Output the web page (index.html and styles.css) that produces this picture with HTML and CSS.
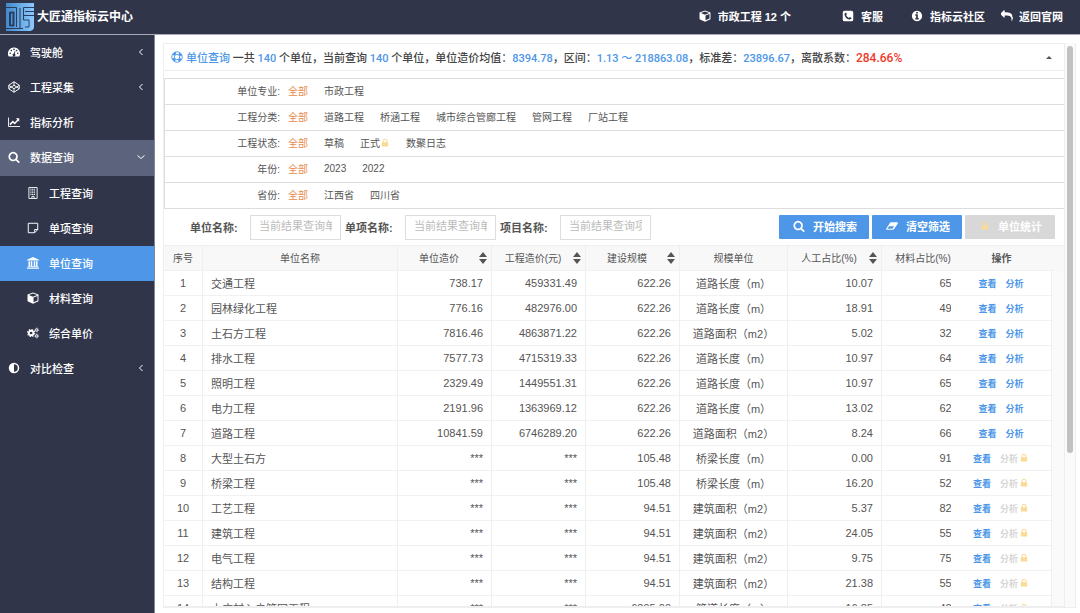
FILE: index.html
```html
<!DOCTYPE html>
<html lang="zh-CN">
<head>
    <meta charset="UTF-8">
    <meta name="viewport" content="width=device-width, initial-scale=1.0">
    <title>大匠通指标云中心</title>
    <link rel="stylesheet" href="styles.css">
</head>
<body>
    <!-- Icon set -->
    <svg class="sprite" aria-hidden="true">
        <symbol id="i-dashboard" viewBox="0 0 16 16"><path fill="currentColor" fill-rule="evenodd" d="M8 2a8 8 0 0 0-7 12h14A8 8 0 0 0 8 2zM3 8.700a1.100 1.100 0 1 1 0 2.200 1.100 1.100 0 0 1 0-2.200zM4.500 5a1.100 1.100 0 1 1 0 2.200 1.100 1.100 0 0 1 0-2.200zM8 3.400a1.100 1.100 0 1 1 0 2.200 1.100 1.100 0 0 1 0-2.200zM11.500 5a1.100 1.100 0 1 1 0 2.200 1.100 1.100 0 0 1 0-2.200zM13 8.700a1.100 1.100 0 1 1 0 2.200 1.100 1.100 0 0 1 0-2.200zM9 6.600l1 .3-1 3.500a1.800 1.800 0 1 1-1.100-.3z"/></symbol>
        <symbol id="i-codepen" viewBox="0 0 16 16"><path fill="none" stroke="currentColor" stroke-width="1.300" stroke-linejoin="round" d="M8 1l7 4.700v4.600L8 15l-7-4.700V5.700zM8 1v4.700M8 10.300V15M1 5.700l7 4.600 7-4.600M1 10.300l7-4.600 7 4.600"/></symbol>
        <symbol id="i-chart" viewBox="0 0 16 16"><path fill="none" stroke="currentColor" stroke-width="1.200" d="M.7 2v12H16"/><path fill="none" stroke="currentColor" stroke-width="2" d="M2.500 11.500l4-4 2.500 2.500L13.500 5"/><path fill="currentColor" d="M10.500 3H15v4.500z"/></symbol>
        <symbol id="i-search" viewBox="0 0 1792 1792"><path fill="currentColor" d="M1216 832q0-185-131.500-316.500t-316.500-131.500-316.500 131.500-131.500 316.500 131.500 316.500 316.500 131.500 316.500-131.500 131.500-316.500zm512 832q0 52-38 90t-90 38q-54 0-90-38l-343-342q-179 124-399 124-143 0-273.500-55.500t-225-150-150-225-55.500-273.500 55.500-273.500 150-225 225-150 273.500-55.500 273.500 55.500 225 150 150 225 55.500 273.500q0 220-124 399l343 343q37 37 37 90z"/></symbol>
        <symbol id="i-building" viewBox="0 0 16 16"><path fill="none" stroke="currentColor" stroke-width="1.200" d="M2.500.700h11v14.600h-11zM6.500 15v-2.500h3V15"/><path stroke="currentColor" stroke-width="1.400" stroke-dasharray="1.500 .8" d="M4.500 3h7M4.500 5.300h7M4.500 7.600h7M4.500 9.900h7"/></symbol>
        <symbol id="i-note" viewBox="0 0 16 16"><path fill="none" stroke="currentColor" stroke-width="1.300" stroke-linejoin="round" d="M1.700 1.700h12.600v8.500l-4.100 4.100H1.700zM14.300 10h-4.100v4.300"/></symbol>
        <symbol id="i-bank" viewBox="0 0 16 16"><path fill="currentColor" d="M8 0l8 3.500v1H0v-1zM2 5.500h2V12h1V5.500h2V12h2V5.500h2V12h1V5.500h2V12h1v1H1v-1h1zM0 14h16v1.500H0z"/></symbol>
        <symbol id="i-cube" viewBox="0 0 16 16"><path fill="currentColor" fill-rule="evenodd" d="M8 .5l7.300 2.900v8.800L8 15.700.7 12.200V3.400zM8 1.900L2.500 4 8 6.200 13.500 4zM8.700 13.800l5.300-2.600V5.300L8.700 7.400z"/></symbol>
        <symbol id="i-cogs" viewBox="0 0 16 16"><g fill="none" stroke="currentColor"><circle cx="5.500" cy="8" r="3" stroke-width="2.400"/><circle cx="5.500" cy="8" r="4.800" stroke-width="1.400" stroke-dasharray="1.900 1.870"/><circle cx="13" cy="4" r="1.600" stroke-width="1.300"/><circle cx="13" cy="4" r="2.600" stroke-width=".8" stroke-dasharray="1.100 .94"/><circle cx="13" cy="12" r="1.600" stroke-width="1.300"/><circle cx="13" cy="12" r="2.600" stroke-width=".8" stroke-dasharray="1.100 .94"/></g></symbol>
        <symbol id="i-adjust" viewBox="0 0 16 16"><path fill="currentColor" fill-rule="evenodd" d="M8 1a7 7 0 1 1 0 14A7 7 0 0 1 8 1zm0 2v10A5 5 0 0 0 8 3z"/></symbol>
        <symbol id="i-phone" viewBox="0 0 16 16"><path fill="currentColor" fill-rule="evenodd" d="M3.500 1h9A2.500 2.500 0 0 1 15 3.500v9a2.500 2.500 0 0 1-2.500 2.500h-9A2.500 2.500 0 0 1 1 12.500v-9A2.500 2.500 0 0 1 3.500 1zm1.700 2.200C3.700 3.700 3 4.900 3.400 6.500c.8 3 3 5.200 6 6.100 1.600.4 2.900-.2 3.400-1.800l-2.300-1.400-1.300 1.200C7.500 9.800 6.200 8.500 5.400 6.800l1.200-1.300z"/></symbol>
        <symbol id="i-info" viewBox="0 0 1792 1792"><path fill="currentColor" d="M1152 1376v-160q0-14-9-23t-23-9h-96v-512q0-14-9-23t-23-9h-320q-14 0-23 9t-9 23v160q0 14 9 23t23 9h96v320h-96q-14 0-23 9t-9 23v160q0 14 9 23t23 9h448q14 0 23-9t9-23zm-128-896v-160q0-14-9-23t-23-9h-192q-14 0-23 9t-9 23v160q0 14 9 23t23 9h192q14 0 23-9t9-23zm640 416q0 209-103 385.500t-279.500 279.500-385.500 103-385.500-103-279.500-279.500-103-385.500 103-385.500 279.500-279.500 385.500-103 385.500 103 279.500 279.500 103 385.500z"/></symbol>
        <symbol id="i-reply" viewBox="0 0 1792 1792"><path fill="currentColor" d="M1792 1120q0 166-127 451-3 7-10.500 24t-13.500 30-13 22q-12 17-28 17-15 0-23.500-10t-8.500-25q0-9 2.500-26.500t2.500-23.500q5-68 5-123 0-112-19.500-200.500t-54-153.500-89-112-117.500-79-150.500-47-175-25-206-7h-224v256q0 26-19 45t-45 19-45-19l-512-512q-19-19-19-45t19-45l512-512q19-19 45-19t45 19 19 45v256h224q713 0 875 403 53 134 53 333z"/></symbol>
        <symbol id="i-lock" viewBox="0 0 1792 1792"><path fill="currentColor" d="M640 768h512v-192q0-106-75-181t-181-75-181 75-75 181v192zm832 96v576q0 40-28 68t-68 28h-960q-40 0-68-28t-28-68v-576q0-40 28-68t68-28h32v-192q0-184 132-316t316-132 316 132 132 316v192h32q40 0 68 28t28 68z"/></symbol>
        <symbol id="i-eraser" viewBox="0 0 16 16"><path fill="currentColor" fill-rule="evenodd" d="M6.500 3H15q1.300.2.800 1.500l-5 7.500q-.5 1-1.600 1H1Q-.300 12.700.200 11.500l5-7.500q.5-1 1.300-1zM1.800 11.700H8.500l2.300-3.400H4.100z"/></symbol>
        <symbol id="i-ring" viewBox="0 0 16 16"><g fill="none" stroke="currentColor"><circle cx="8" cy="8" r="7" stroke-width="1.200"/><circle cx="8" cy="8" r="3.600" stroke-width="1.200"/><circle cx="8" cy="8" r="5.300" stroke-width="3" stroke-dasharray="4.160 4.160" stroke-dashoffset="6.240"/></g></symbol>
        <symbol id="i-left" viewBox="0 0 16 16"><path fill="none" stroke="currentColor" stroke-width="2" d="M11 2L5 8l6 6"/></symbol>
        <symbol id="i-down" viewBox="0 0 16 16"><path fill="none" stroke="currentColor" stroke-width="2" d="M1 5l7 6 7-6"/></symbol>
        <symbol id="i-sort" viewBox="0 0 8 12"><path fill="currentColor" d="M4 0l4 5H0zM0 7h8l-4 5z"/></symbol>
        <symbol id="i-up" viewBox="0 0 6 3"><path fill="currentColor" d="M3 0l3 3H0z"/></symbol>
    </svg>

    <header class="topbar">
        <svg class="logo" viewBox="0 0 28 28" role="img" aria-label="logo">
            <defs><linearGradient id="logoFill"><stop offset="0" stop-color="#4089cb"/><stop offset="1" stop-color="#8dcaff"/></linearGradient></defs>
            <path fill="url(#logoFill)" d="M0 0h28v24q0 3-4 4H0z"/>
            <g fill="none" stroke="#2b3d5e">
                <path d="M0 4.500h10.500V24M28 4.500H17.500V14M28 8.500H19M28 12.500H17.500V17H23v7h-4M14 5v20M0 25.500h17"/>
                <path stroke-width="2" d="M4 9v14M4 9.500h3.500v13H4"/>
            </g>
        </svg>
        <h1 class="brand">大匠通指标云中心</h1>
        <nav class="top-links">
            <a href="#" class="link-project"><svg class="icon"><use href="#i-cube"/></svg>市政工程 12 个</a>
            <a href="#" class="link-service"><svg class="icon"><use href="#i-phone"/></svg>客服</a>
            <a href="#" class="link-community"><svg class="icon"><use href="#i-info"/></svg>指标云社区</a>
            <a href="#" class="link-home"><svg class="icon"><use href="#i-reply"/></svg>返回官网</a>
        </nav>
    </header>

    <div class="layout">
        <nav class="sidebar">
            <a href="#"><svg class="icon"><use href="#i-dashboard"/></svg>驾驶舱<svg class="arrow"><use href="#i-left"/></svg></a>
            <a href="#"><svg class="icon"><use href="#i-codepen"/></svg>工程采集<svg class="arrow"><use href="#i-left"/></svg></a>
            <a href="#"><svg class="icon"><use href="#i-chart"/></svg>指标分析</a>
            <a href="#" class="open"><svg class="icon"><use href="#i-search"/></svg>数据查询<svg class="arrow"><use href="#i-down"/></svg></a>
            <a href="#" class="sub"><svg class="icon"><use href="#i-building"/></svg>工程查询</a>
            <a href="#" class="sub"><svg class="icon"><use href="#i-note"/></svg>单项查询</a>
            <a href="#" class="sub active"><svg class="icon"><use href="#i-bank"/></svg>单位查询</a>
            <a href="#" class="sub"><svg class="icon"><use href="#i-cube"/></svg>材料查询</a>
            <a href="#" class="sub"><svg class="icon"><use href="#i-cogs"/></svg>综合单价</a>
            <a href="#"><svg class="icon"><use href="#i-adjust"/></svg>对比检查<svg class="arrow"><use href="#i-left"/></svg></a>
        </nav>

        <main class="content">
            <section class="panel">
                <div class="summary">
                    <svg class="icon"><use href="#i-ring"/></svg>
                    <p><b>单位查询</b> 一共 <b>140</b> 个单位，当前查询 <b>140</b> 个单位，单位造价均值：<b>8394.78</b>，区间：<b>1.13 ～ 218863.08</b>，标准差：<b>23896.67</b>，离散系数：<strong>284.66%</strong></p>
                    <button type="button" class="collapse" aria-label="收起"><svg><use href="#i-up"/></svg></button>
                </div>

                <div class="filters">
                    <div class="filter"><span class="name">单位专业:</span><a href="#" class="on">全部</a><a href="#">市政工程</a></div>
                    <div class="filter"><span class="name">工程分类:</span><a href="#" class="on">全部</a><a href="#">道路工程</a><a href="#">桥涵工程</a><a href="#">城市综合管廊工程</a><a href="#">管网工程</a><a href="#">厂站工程</a></div>
                    <div class="filter"><span class="name">工程状态:</span><a href="#" class="on">全部</a><a href="#">草稿</a><a href="#">正式<svg class="lock"><use href="#i-lock"/></svg></a><a href="#">数聚日志</a></div>
                    <div class="filter"><span class="name">年份:</span><a href="#" class="on">全部</a><a href="#">2023</a><a href="#">2022</a></div>
                    <div class="filter"><span class="name">省份:</span><a href="#" class="on">全部</a><a href="#">江西省</a><a href="#">四川省</a></div>
                </div>

                <form class="search">
                    <label for="unitName">单位名称:</label>
                    <input type="text" id="unitName" placeholder="当前结果查询单位">
                    <label for="itemName">单项名称:</label>
                    <input type="text" id="itemName" placeholder="当前结果查询单项">
                    <label for="projectName">项目名称:</label>
                    <input type="text" id="projectName" placeholder="当前结果查询项目">
                    <div class="buttons">
                        <button type="button"><svg class="icon"><use href="#i-search"/></svg>开始搜索</button>
                        <button type="button"><svg class="icon"><use href="#i-eraser"/></svg>清空筛选</button>
                        <button type="button" disabled><svg class="icon lock"><use href="#i-lock"/></svg>单位统计</button>
                    </div>
                </form>

                <div class="table-wrap">
                    <table>
                        <colgroup>
                            <col class="c-no"><col class="c-name"><col class="c-num"><col class="c-num"><col class="c-num"><col class="c-unit"><col class="c-num"><col class="c-num"><col class="c-ops"><col class="c-gutter">
                        </colgroup>
                        <thead>
                            <tr>
                                <th>序号</th>
                                <th>单位名称</th>
                                <th><div class="sortable"><span>单位造价</span><button type="button" aria-label="排序"><svg><use href="#i-sort"/></svg></button></div></th>
                                <th><div class="sortable"><span>工程造价(元)</span><button type="button" aria-label="排序"><svg><use href="#i-sort"/></svg></button></div></th>
                                <th><div class="sortable"><span>建设规模</span><button type="button" aria-label="排序"><svg><use href="#i-sort"/></svg></button></div></th>
                                <th>规模单位</th>
                                <th><div class="sortable"><span>人工占比(%)</span><button type="button" aria-label="排序"><svg><use href="#i-sort"/></svg></button></div></th>
                                <th><div class="sortable"><span>材料占比(%)</span><button type="button" aria-label="排序"><svg><use href="#i-sort"/></svg></button></div></th>
                                <th class="ops">操作</th>
                                <th class="gutter"></th>
                            </tr>
                        </thead>
                        <tbody id="rows"></tbody>
                    </table>
                </div>
            </section>
            <div class="scrollbar"><div class="thumb"></div></div>
        </main>
    </div>

    <script>
        // name, unit cost, total cost, scale, scale unit, labour %, material %
        const rows = [
            ["交通工程", "738.17", "459331.49", "622.26", "道路长度（m）", "10.07", "65.20"],
            ["园林绿化工程", "776.16", "482976.00", "622.26", "道路长度（m）", "18.91", "49.20"],
            ["土石方工程", "7816.46", "4863871.22", "622.26", "道路面积（m2）", "5.02", "32.20"],
            ["排水工程", "7577.73", "4715319.33", "622.26", "道路长度（m）", "10.97", "64.20"],
            ["照明工程", "2329.49", "1449551.31", "622.26", "道路长度（m）", "10.97", "65.20"],
            ["电力工程", "2191.96", "1363969.12", "622.26", "道路长度（m）", "13.02", "62.20"],
            ["道路工程", "10841.59", "6746289.20", "622.26", "道路面积（m2）", "8.24", "66.20"],
            ["大型土石方", "***", "***", "105.48", "桥梁长度（m）", "0.00", "91.20"],
            ["桥梁工程", "***", "***", "105.48", "桥梁长度（m）", "16.20", "52.20"],
            ["工艺工程", "***", "***", "94.51", "建筑面积（m2）", "5.37", "82.20"],
            ["建筑工程", "***", "***", "94.51", "建筑面积（m2）", "24.05", "55.20"],
            ["电气工程", "***", "***", "94.51", "建筑面积（m2）", "9.75", "75.20"],
            ["结构工程", "***", "***", "94.51", "建筑面积（m2）", "21.38", "55.20"],
            ["小庄村入户管网工程", "***", "***", "6895.00", "管道长度（m）", "16.85", "48.20"]
        ];

        const lock = '<svg class="lock"><use href="#i-lock"/></svg>';

        document.getElementById("rows").innerHTML = rows.map((r, i) => {
            const locked = r[1] === "***";
            const analyse = locked ? `<span class="off">分析</span>${lock}` : '<a href="#">分析</a>';
            return `<tr>
                <td class="center">${i + 1}</td>
                <td>${r[0]}</td>
                <td class="num">${r[1]}</td>
                <td class="num">${r[2]}</td>
                <td class="num">${r[3]}</td>
                <td class="center">${r[4]}</td>
                <td class="num">${r[5]}</td>
                <td class="num">${r[6]}</td>
                <td class="ops"><a href="#">查看</a>${analyse}</td>
                <td class="gutter"></td>
            </tr>`;
        }).join("");
    </script>
</body>
</html>
```

FILE: styles.css
```css
* {
    box-sizing: border-box;
}
body {
    margin: 0;
    height: 100vh;
    display: flex;
    flex-direction: column;
    font-family: "Liberation Sans", "Noto Sans CJK SC", sans-serif;
    font-size: 11px;
    color: #555;
    background: #fff;
    overflow: hidden;
}
a {
    color: inherit;
    text-decoration: none;
}
button {
    font: inherit;
    border: 0;
    padding: 0;
    cursor: pointer;
}
svg {
    flex: none;
}
.sprite {
    position: absolute;
    width: 0;
    height: 0;
}
.icon {
    width: 12px;
    height: 12px;
}
.lock {
    width: 10px;
    height: 10px;
    color: #fadb96;
}

/* Top bar */
.topbar {
    display: flex;
    align-items: center;
    height: 35px;
    flex: none;
    padding: 0 17px 0 6px;
    background: #30354a;
    border-bottom: 1px solid #a9acb8;
    color: #fff;
}
.logo {
    width: 28px;
    height: 28px;
}
.brand {
    margin: 0 0 3px 3px;
    font-size: 12px;
    font-weight: 700;
}
.top-links {
    display: flex;
    margin-left: auto;
    padding-bottom: 2px;
    font-weight: 700;
}
.top-links a {
    display: flex;
    align-items: center;
    gap: 7px;
}
.link-service {
    margin-left: 51px;
}
.link-community {
    margin-left: 28px;
}
.top-links .link-home {
    margin-left: 16px;
    gap: 6px;
}

.layout {
    display: flex;
    flex: 1;
    min-height: 0;
}

/* Left menu */
.sidebar {
    width: 155px;
    flex: none;
    background: #30354a;
    border-right: 1px solid #83869a;
    color: #fff;
    font-weight: 500;
}
.sidebar a {
    display: flex;
    align-items: center;
    height: 35px;
    padding: 0 9px 2px 8px;
}
.sidebar .icon {
    margin-right: 10px;
}
.sidebar .arrow {
    width: 8px;
    height: 8px;
    margin-left: auto;
}
.sidebar .sub {
    padding-left: 27px;
}
.sidebar .open {
    background: #5c637c;
    height: 36px;
}
.sidebar .active {
    background: #4e97e8;
}

/* Page */
.content {
    display: flex;
    flex: 1;
    min-width: 0;
    padding: 8px 4px 5px 8px;
}
.panel {
    display: flex;
    flex-direction: column;
    flex: 1;
    min-width: 0;
    border: 1px solid #eee;
    border-right: 0;
}
.scrollbar {
    width: 12px;
    padding: 3px 2px;
    background: #fafafa;
    border: 1px solid #eee;
    border-width: 0 1px 1px;
}
.thumb {
    width: 6px;
    height: 73%;
    border-radius: 3px;
    background: #c1c1c1;
}

.summary {
    display: flex;
    align-items: center;
    height: 27px;
    padding: 0 12px 0 7px;
    border-bottom: 1px solid #eee;
    font-family: Roboto, "Noto Sans CJK SC", sans-serif;
    font-weight: 500;
    color: #444;
    white-space: nowrap;
}
.summary .icon {
    margin-right: 3px;
    color: #4e97e8;
}
.summary p {
    margin: 0;
    padding-bottom: 1px;
}
.summary b {
    font-weight: 500;
    color: #4e97e8;
}
.summary strong {
    font-size: 12px;
    font-weight: 500;
    color: #f0392b;
}
.collapse {
    display: flex;
    margin-left: auto;
    background: none;
    color: #555;
}
.collapse svg {
    width: 6px;
    height: 3px;
}

/* Filters */
.filters {
    margin-top: 7px;
    border: 1px solid #ddd;
    border-width: 0 0 1px 1px;
    font-size: 10px;
}
.filter {
    display: flex;
    align-items: center;
    height: 26px;
    padding-bottom: 2px;
    border-top: 1px solid #ddd;
}
.filter .name {
    width: 115px;
    text-align: right;
}
.filter a {
    display: flex;
    align-items: center;
    padding: 0 8px;
}
.filter .on {
    color: #ea8a4b;
}

/* Search form */
.search {
    display: flex;
    align-items: center;
    height: 36px;
    padding: 0 9px 0 26px;
    font-weight: 700;
}
.search label {
    width: 60px;
    padding-bottom: 1px;
}
.search input {
    width: 91px;
    height: 25px;
    margin-right: 4px;
    padding: 0 8px 2px;
    border: 1px solid #ddd;
    font: 11px "Liberation Sans", "Noto Sans CJK SC", sans-serif;
    color: #555;
}
.search input::placeholder {
    color: #bbb;
}
.buttons {
    display: flex;
    gap: 3px;
    margin-left: auto;
}
.buttons button {
    display: flex;
    align-items: center;
    justify-content: center;
    gap: 8px;
    width: 90px;
    height: 24px;
    padding: 0 0 2px 2px;
    border-radius: 1px;
    background: #4e97e8;
    color: #fff;
}
.buttons button:disabled {
    background: #d8d8d8;
}

/* Data table */
.table-wrap {
    flex: 1;
    min-height: 0;
    overflow: hidden;
    border-top: 1px solid #eee;
    border-bottom: 1px solid #eee;
}
table {
    width: 100%;
    min-width: 925px;
    table-layout: fixed;
    border-collapse: separate;
    border-spacing: 0;
}
.c-no {
    width: 39px;
}
.c-num {
    width: 94px;
}
.c-name {
    width: 195px;
}
.c-unit {
    width: 108px;
}
.c-ops {
    width: 101px;
}
.c-gutter {
    width: 12px;
}
th,
td {
    height: 25px;
    padding: 0 8px;
    border-right: 1px solid #eef0f0;
    border-bottom: 1px solid #f0f2f2;
    white-space: nowrap;
    overflow: hidden;
}
th {
    padding: 0 3px 1px;
    background: #f8f8f9;
    font-size: 10px;
    font-weight: 400;
}
.sortable {
    display: flex;
    align-items: center;
    gap: 2px;
    padding-right: 1px;
}
.sortable span {
    flex: 1;
}
.sortable button {
    display: flex;
    background: none;
    color: #555;
}
.sortable svg {
    width: 8px;
    height: 12px;
}
.num {
    text-align: right;
}
.center {
    text-align: center;
}
.ops,
.gutter {
    position: sticky;
    right: 0;
    background: #fff;
}
.ops {
    right: 12px;
    padding: 0;
    font-size: 9px;
    font-weight: 700;
    text-align: center;
}
.gutter {
    padding: 0;
    background: #fafafa;
    border: 0;
}
th.ops {
    padding-bottom: 1px;
    font-size: 10px;
    font-weight: 700;
    border-right: 0;
}
th.ops,
th.gutter {
    background: #f8f8f9;
}
.ops a {
    color: #4e97e8;
}
.ops a + a,
.ops .off {
    margin-left: 9px;
}
.ops .off {
    color: #d5d5d5;
}
.ops .lock {
    margin-left: 1px;
    vertical-align: -1px;
}
```
